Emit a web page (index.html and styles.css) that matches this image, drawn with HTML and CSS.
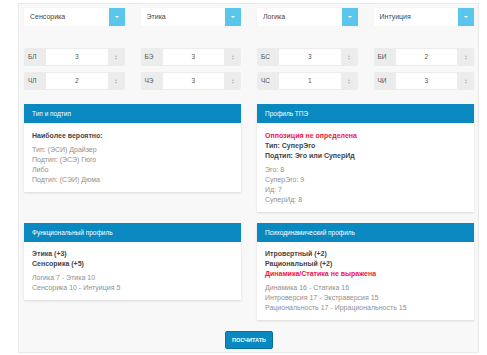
FILE: index.html
```html
<!DOCTYPE html>
<html lang="ru">
<head>
    <meta charset="UTF-8">
    <meta name="viewport" content="width=device-width, initial-scale=1.0">
    <title>Соционика</title>
    <link rel="stylesheet" href="styles.css">
</head>
<body>
    <div class="panel">
        <div class="selects">
            <div class="select"><span class="select-text">Сенсорика</span><span class="select-btn"><span class="caret"></span></span></div>
            <div class="select"><span class="select-text">Этика</span><span class="select-btn"><span class="caret"></span></span></div>
            <div class="select"><span class="select-text">Логика</span><span class="select-btn"><span class="caret"></span></span></div>
            <div class="select"><span class="select-text">Интуиция</span><span class="select-btn"><span class="caret"></span></span></div>
        </div>

        <div class="inputs">
            <div class="input-group"><span class="addon">БЛ</span><span class="value">3</span><span class="spin"><i class="up"></i><i class="down"></i></span></div>
            <div class="input-group"><span class="addon">БЭ</span><span class="value">3</span><span class="spin"><i class="up"></i><i class="down"></i></span></div>
            <div class="input-group"><span class="addon">БС</span><span class="value">3</span><span class="spin"><i class="up"></i><i class="down"></i></span></div>
            <div class="input-group"><span class="addon">БИ</span><span class="value">2</span><span class="spin"><i class="up"></i><i class="down"></i></span></div>
            <div class="input-group"><span class="addon">ЧЛ</span><span class="value">2</span><span class="spin"><i class="up"></i><i class="down"></i></span></div>
            <div class="input-group"><span class="addon">ЧЭ</span><span class="value">3</span><span class="spin"><i class="up"></i><i class="down"></i></span></div>
            <div class="input-group"><span class="addon">ЧС</span><span class="value">1</span><span class="spin"><i class="up"></i><i class="down"></i></span></div>
            <div class="input-group"><span class="addon">ЧИ</span><span class="value">3</span><span class="spin"><i class="up"></i><i class="down"></i></span></div>
        </div>

        <div class="cards">
            <div class="card">
                <div class="card-head">Тип и подтип</div>
                <div class="card-body">
                    <div class="lead">
                        <div class="bold">Наиболее вероятно:</div>
                    </div>
                    <div class="muted">Тип: (ЭСИ) Драйзер</div>
                    <div class="muted">Подтип: (ЭСЭ) Гюго</div>
                    <div class="muted">Либо</div>
                    <div class="muted">Подтип: (СЭИ) Дюма</div>
                </div>
            </div>
            <div class="card">
                <div class="card-head">Профиль ТПЭ</div>
                <div class="card-body">
                    <div class="lead">
                        <div class="bold red">Оппозиция не определена</div>
                        <div class="bold">Тип: СуперЭго</div>
                        <div class="bold">Подтип: Эго или СуперИд</div>
                    </div>
                    <div class="muted">Эго: 8</div>
                    <div class="muted">СуперЭго: 9</div>
                    <div class="muted">Ид: 7</div>
                    <div class="muted">СуперИд: 8</div>
                </div>
            </div>
            <div class="card">
                <div class="card-head">Функциональный профиль</div>
                <div class="card-body">
                    <div class="lead">
                        <div class="bold">Этика (+3)</div>
                        <div class="bold">Сенсорика (+5)</div>
                    </div>
                    <div class="muted">Логика 7 - Этика 10</div>
                    <div class="muted">Сенсорика 10 - Интуиция 5</div>
                </div>
            </div>
            <div class="card">
                <div class="card-head">Психодинамический профиль</div>
                <div class="card-body">
                    <div class="lead">
                        <div class="bold">Итровертный (+2)</div>
                        <div class="bold">Рациональный (+2)</div>
                        <div class="bold red">Динамика/Статика не выражена</div>
                    </div>
                    <div class="muted">Динамика 16 - Статика 16</div>
                    <div class="muted">Интроверсия 17 - Экстраверсия 15</div>
                    <div class="muted">Рациональность 17 - Иррациональность 15</div>
                </div>
            </div>
        </div>

        <div class="actions">
            <button class="calc-btn">Посчитать</button>
        </div>
    </div>
</body>
</html>
```

FILE: styles.css
```css
* {
    margin: 0;
    padding: 0;
    box-sizing: border-box;
}

body {
    background: #fff;
    font-family: "Liberation Sans", Arial, sans-serif;
    font-size: 7px;
    color: #333;
}

.panel {
    margin: 3px 0 0 18px;
    width: 461px;
    height: 350px;
    background: #f8f8f8;
    border: 1px solid #e9e9e9;
    padding: 4px 4px 4px 5px;
}

.selects {
    display: grid;
    grid-template-columns: repeat(4, 1fr);
    column-gap: 16px;
    margin-bottom: 22px;
}

.select {
    display: flex;
    height: 18px;
    background: #fff;
    box-shadow: 0 0 1px rgba(0, 0, 0, 0.08);
}

.select-text {
    flex: 1;
    line-height: 18px;
    padding-left: 6px;
    color: #444;
}

.select-btn {
    width: 16px;
    background: #5bc6ec;
    display: flex;
    align-items: center;
    justify-content: center;
}

.caret {
    width: 0;
    height: 0;
    border-left: 2px solid transparent;
    border-right: 2px solid transparent;
    border-top: 2px solid #fff;
}

.inputs {
    display: grid;
    grid-template-columns: repeat(4, 1fr);
    column-gap: 16px;
    row-gap: 6px;
}

.input-group {
    display: flex;
    height: 18px;
    background: #ececec;
    border-radius: 2px;
    padding: 1px 0;
}

.addon {
    width: 22px;
    line-height: 16px;
    padding-left: 4px;
    color: #555;
    font-size: 6.5px;
}

.value {
    flex: 1;
    background: #fff;
    text-align: center;
    line-height: 16px;
    color: #555;
    font-size: 6.5px;
}

.spin {
    width: 17px;
    display: flex;
    flex-direction: column;
    align-items: center;
    justify-content: center;
    gap: 1px;
}

.spin .up,
.spin .down {
    width: 0;
    height: 0;
    border-left: 1.5px solid transparent;
    border-right: 1.5px solid transparent;
}

.spin .up {
    border-bottom: 2px solid #b5b5b5;
}

.spin .down {
    border-top: 2px solid #b5b5b5;
}

.cards {
    display: grid;
    grid-template-columns: 1fr 1fr;
    column-gap: 16px;
    row-gap: 11px;
    align-items: start;
    margin-top: 14px;
}

.card {
    background: #fff;
    box-shadow: 0 1px 2px rgba(0, 0, 0, 0.12);
}

.card-head {
    height: 19px;
    line-height: 19px;
    background: #0a89c1;
    color: #fff;
    padding-left: 8px;
    font-size: 6.5px;
}

.card-body {
    padding: 7.5px 8px 7px;
    line-height: 10px;
}

.lead {
    margin-bottom: 4px;
}

.bold {
    font-weight: bold;
    color: #444;
}

.red {
    color: #ef1546;
}

.muted {
    color: #909090;
}

.actions {
    text-align: center;
    margin-top: 10.5px;
}

.calc-btn {
    width: 48px;
    height: 18px;
    background: #0a89c1;
    border: 1px solid #07709f;
    border-radius: 2px;
    color: #fff;
    font-family: "Liberation Sans", Arial, sans-serif;
    font-size: 5.5px;
    font-weight: bold;
    text-transform: uppercase;
}
```
